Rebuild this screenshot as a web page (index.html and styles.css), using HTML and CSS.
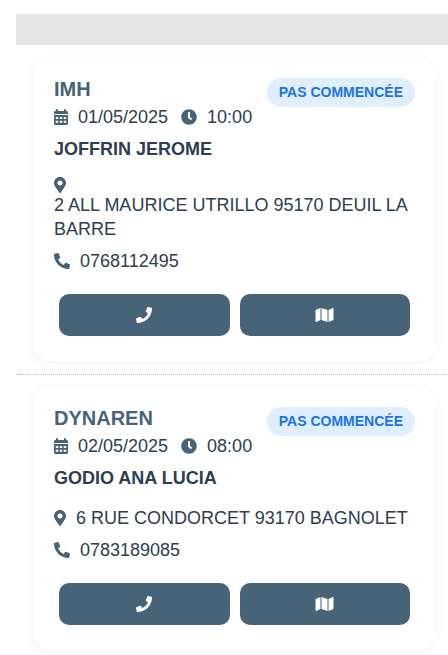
FILE: index.html
```html
<!DOCTYPE html>
<html lang="fr">
<head>
<meta charset="utf-8">
<meta name="viewport" content="width=device-width, initial-scale=1">
<title>Interventions</title>
<link rel="stylesheet" href="styles.css">
</head>
<body>
<svg class="sprite" aria-hidden="true">
  <symbol id="calendar" viewBox="0 0 448 512"><path fill-rule="evenodd" d="M400 64h-16V32a32 32 0 0 0-64 0v32H128V32a32 32 0 0 0-64 0v32H48C21 64 0 85 0 112v48h448v-48c0-27-21-48-48-48zM0 192v272c0 27 21 48 48 48h352c27 0 48-21 48-48V192H0zM56 256h80v64H56zM184 256h80v64h-80zM312 256h80v64h-80zM56 376h80v64H56zM184 376h80v64h-80zM312 376h80v64h-80z"/></symbol>
  <symbol id="clock" viewBox="0 0 512 512"><path d="M256 8C119 8 8 119 8 256s111 248 248 248 248-111 248-248S393 8 256 8zm92.490 313l-20 25a16 16 0 0 1-22.490 2.500l-67-49.720a40 40 0 0 1-15-31.230V112a16 16 0 0 1 16-16h32a16 16 0 0 1 16 16v144l58 42.500a16 16 0 0 1 2.490 22.500z"/></symbol>
  <symbol id="pin" viewBox="0 0 384 512"><path d="M172.268 501.670C26.970 291.031 0 269.413 0 192 0 85.961 85.961 0 192 0s192 85.961 192 192c0 77.413-26.970 99.031-172.268 309.670-9.535 13.774-29.930 13.773-39.464 0zM192 272c44.183 0 80-35.817 80-80s-35.817-80-80-80-80 35.817-80 80 35.817 80 80 80z"/></symbol>
  <symbol id="handset" viewBox="0 0 512 512"><path d="M497.390 361.800l-112-48a24 24 0 0 0-28 6.900l-49.600 60.600A370.660 370.660 0 0 1 130.600 204.110l60.600-49.600a23.940 23.940 0 0 0 6.900-28l-48-112A24.160 24.160 0 0 0 122.600.610l-104 24A24 24 0 0 0 0 48c0 256.500 207.900 464 464 464a24 24 0 0 0 23.400-18.600l24-104a24.290 24.290 0 0 0-14.010-27.600z"/></symbol>
  <symbol id="call" viewBox="0 0 512 512"><path d="M493.400 24.600l-104-24c-11.300-2.600-22.900 3.300-27.500 13.900l-48 112c-4.200 9.800-1.400 21.300 6.900 28l60.600 49.600c-36 76.700-98.900 140.500-177.200 177.200l-49.600-60.600c-6.800-8.300-18.200-11.100-28-6.900l-112 48C3.900 366.500-2 378.100.6 389.400l24 104C27.100 504.200 36.700 512 48 512c256.100 0 464-207.500 464-464 0-11.200-7.700-20.900-18.600-23.400z"/></symbol>
  <symbol id="map" viewBox="0 0 576 512"><path d="M0 117.660v346.320c0 11.320 11.430 19.060 21.940 14.860L160 416V32L20.120 87.950A32.006 32.006 0 0 0 0 117.660zM192 416l192 64V96L192 32v384zM554.060 33.160L416 96v384l139.880-55.950A31.996 31.996 0 0 0 576 394.340V48.020c0-11.320-11.430-19.060-21.940-14.860z"/></symbol>
</svg>
<main class="page">
  <div class="bar"></div>
  <ul class="list">
    <li class="item">
      <article class="card">
        <header class="head">
          <h2 class="title">IMH</h2>
          <span class="badge">PAS COMMENCÉE</span>
        </header>
        <div class="when">
          <span class="field"><svg class="icon narrow"><use href="#calendar"/></svg><span>01/05/2025</span></span>
          <span class="field"><svg class="icon"><use href="#clock"/></svg><span>10:00</span></span>
        </div>
        <h3 class="name">JOFFRIN JEROME</h3>
        <div class="field address"><svg class="icon slim"><use href="#pin"/></svg><span>2 ALL MAURICE UTRILLO 95170 DEUIL LA BARRE</span></div>
        <div class="field phone"><svg class="icon"><use href="#handset"/></svg><span>0768112495</span></div>
        <div class="actions">
          <button class="action" type="button" aria-label="Appeler"><svg class="icon"><use href="#call"/></svg></button>
          <button class="action" type="button" aria-label="Carte"><svg class="icon wide"><use href="#map"/></svg></button>
        </div>
      </article>
    </li>
    <li class="item">
      <article class="card">
        <header class="head">
          <h2 class="title">DYNAREN</h2>
          <span class="badge">PAS COMMENCÉE</span>
        </header>
        <div class="when">
          <span class="field"><svg class="icon narrow"><use href="#calendar"/></svg><span>02/05/2025</span></span>
          <span class="field"><svg class="icon"><use href="#clock"/></svg><span>08:00</span></span>
        </div>
        <h3 class="name">GODIO ANA LUCIA</h3>
        <div class="field address"><svg class="icon slim"><use href="#pin"/></svg><span>6 RUE CONDORCET 93170 BAGNOLET</span></div>
        <div class="field phone"><svg class="icon"><use href="#handset"/></svg><span>0783189085</span></div>
        <div class="actions">
          <button class="action" type="button" aria-label="Appeler"><svg class="icon"><use href="#call"/></svg></button>
          <button class="action" type="button" aria-label="Carte"><svg class="icon wide"><use href="#map"/></svg></button>
        </div>
      </article>
    </li>
  </ul>
</main>
</body>
</html>
```
FILE: styles.css
```css
* {
  box-sizing: border-box;
}

body {
  margin: 0;
  background: #fff;
  color: #2c3e50;
  font-family: "Liberation Sans", Arial, sans-serif;
  font-size: 18px;
  line-height: 24px;
  overflow-x: hidden;
}

.sprite {
  display: none;
}

.page {
  padding: 14px 0 0 16px;
}

.bar {
  height: 31px;
  background: #e5e5e5;
}

.list {
  margin: 0;
  padding: 0;
  list-style: none;
}

.item {
  padding: 13px 13px 13px 18px;
}

.item:last-child {
  padding-bottom: 4px;
}

.item + .item {
  padding-top: 12px;
  border-top: 1px dotted #bbb;
}

.card {
  padding: 20px 20px 25px;
  border-radius: 16px;
  background: #fff;
  box-shadow: 0 2px 12px rgba(0, 0, 0, 0.05);
}

.head {
  display: flex;
  justify-content: space-between;
  align-items: flex-start;
  height: 27px;
}

.title {
  margin: 0;
  color: #476377;
  font-size: 20px;
  line-height: 22px;
}

.badge {
  padding: 4px 12px;
  border-radius: 20px;
  background: #e0efff;
  color: #1a73e8;
  font-size: 14px;
  font-weight: bold;
  line-height: 21px;
}

.when {
  display: flex;
  gap: 13px;
}

.field {
  display: flex;
  align-items: center;
  gap: 0 10px;
}

.name {
  margin: 8px 0 16px;
  font-size: 18px;
  line-height: 24px;
}

.address {
  flex-wrap: wrap;
}

.phone {
  margin-top: 8px;
}

.icon {
  flex: none;
  display: block;
  width: 16px;
  height: 16px;
  fill: #476377;
}

.narrow {
  width: 14px;
}

.slim {
  width: 12px;
}

.wide {
  width: 19px;
}

.actions {
  display: flex;
  gap: 10px;
  margin: 21px 5px 0;
}

.action {
  flex: 1;
  display: flex;
  justify-content: center;
  align-items: center;
  padding: 13px;
  border: 0;
  border-radius: 10px;
  background: #476377;
}

.action .icon {
  fill: #fff;
}
```
